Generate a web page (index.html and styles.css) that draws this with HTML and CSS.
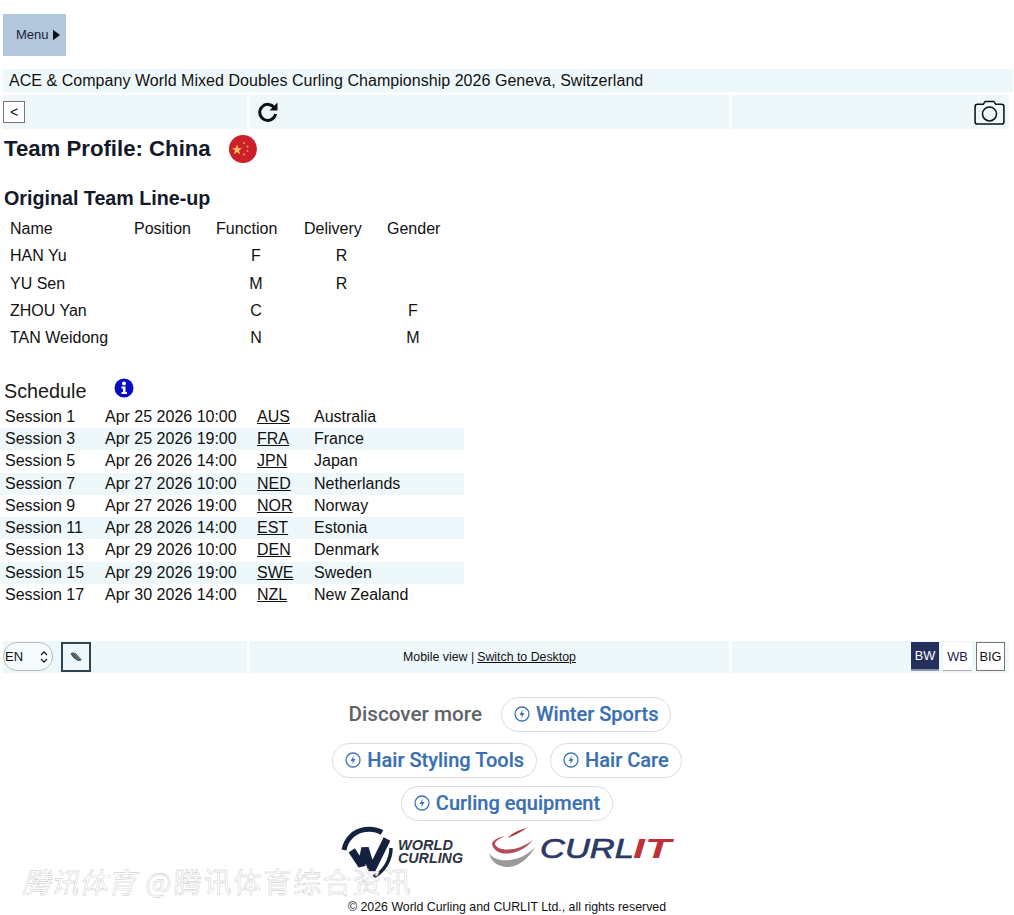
FILE: index.html
```html
<!DOCTYPE html>
<html lang="en">
<head>
<meta charset="utf-8">
<title>Team Profile: China</title>
<link rel="stylesheet" href="styles.css">
</head>
<body>
<div class="page">
  <button class="menu-btn">Menu <svg class="menu-arrow" viewBox="0 0 8 12" width="7" height="12"><path d="M0 0L8 6L0 12Z"/></svg></button>
  <div class="title-band">ACE &amp; Company World Mixed Doubles Curling Championship 2026 Geneva, Switzerland</div>
  <div class="tri-band tool-band">
    <div class="cell cell-a"><button class="back-btn">&lt;</button></div>
    <div class="cell cell-b">
      <svg class="refresh" viewBox="0 0 24 24" width="24" height="24"><path d="M18.600 8.200A8 8 0 1 0 19.600 14" fill="none" stroke="#111" stroke-width="3"/><path d="M21.500 2.500V10.500H13.500Z" fill="#111"/></svg>
    </div>
    <div class="cell cell-c">
      <svg class="camera" viewBox="0 0 32 26" width="31" height="25"><path d="M3.500 4.500H9.500L11.500 1.500H20.500L22.500 4.500H28.500Q31 4.500 31 7V22.500Q31 25 28.500 25H3.500Q1 25 1 22.500V7Q1 4.500 3.500 4.500Z" fill="none" stroke="#111" stroke-width="1.600"/><circle cx="16" cy="14.500" r="7.300" fill="none" stroke="#111" stroke-width="1.600"/></svg>
    </div>
  </div>

  <div class="profile-head">
    <h1 class="profile-title">Team Profile: China</h1>
    <svg class="flag" viewBox="0 0 28 28" width="28" height="28">
      <circle cx="14" cy="14" r="14" fill="#cb2029"/>
      <path d="M8 9.500L9.300 13.200H13L10 15.500L11.100 19.200L8 17L4.900 19.200L6 15.500L3 13.200H6.700Z" fill="#f7c35f"/>
      <circle cx="15" cy="8" r="1" fill="#f0a050"/><circle cx="18.500" cy="11.500" r="1" fill="#f0a050"/><circle cx="18.500" cy="16" r="1" fill="#f0a050"/><circle cx="15" cy="19.500" r="1" fill="#f0a050"/>
    </svg>
  </div>

  <h2 class="lineup-title">Original Team Line-up</h2>
  <table class="lineup">
    <tr><td class="l-name">Name</td><td class="l-pos">Position</td><td class="l-h">Function</td><td class="l-h l-h-wide">Delivery</td><td class="l-h">Gender</td></tr>
    <tr><td class="l-name">HAN Yu</td><td></td><td class="l-c">F</td><td class="l-c">R</td><td></td></tr>
    <tr><td class="l-name">YU Sen</td><td></td><td class="l-c">M</td><td class="l-c">R</td><td></td></tr>
    <tr><td class="l-name">ZHOU Yan</td><td></td><td class="l-c">C</td><td></td><td class="l-c">F</td></tr>
    <tr><td class="l-name">TAN Weidong</td><td></td><td class="l-c">N</td><td></td><td class="l-c">M</td></tr>
  </table>

  <div class="schedule-head">
    <span class="schedule-title">Schedule</span>
    <svg class="info" viewBox="0 0 20 20" width="20" height="20"><circle cx="10" cy="10" r="9.500" fill="#0b0bc4"/><circle cx="10" cy="5.500" r="2" fill="#fff"/><path d="M7.500 8.500H11.500V14H13V16H7.500V14H9V10.500H7.500Z" fill="#fff"/></svg>
  </div>
  <div class="schedule">
    <div class="s-row"><span class="s-a">Session 1</span><span class="s-b">Apr 25 2026 10:00</span><a class="s-c">AUS</a><span>Australia</span></div>
    <div class="s-row alt"><span class="s-a">Session 3</span><span class="s-b">Apr 25 2026 19:00</span><a class="s-c">FRA</a><span>France</span></div>
    <div class="s-row"><span class="s-a">Session 5</span><span class="s-b">Apr 26 2026 14:00</span><a class="s-c">JPN</a><span>Japan</span></div>
    <div class="s-row alt"><span class="s-a">Session 7</span><span class="s-b">Apr 27 2026 10:00</span><a class="s-c">NED</a><span>Netherlands</span></div>
    <div class="s-row"><span class="s-a">Session 9</span><span class="s-b">Apr 27 2026 19:00</span><a class="s-c">NOR</a><span>Norway</span></div>
    <div class="s-row alt"><span class="s-a">Session 11</span><span class="s-b">Apr 28 2026 14:00</span><a class="s-c">EST</a><span>Estonia</span></div>
    <div class="s-row"><span class="s-a">Session 13</span><span class="s-b">Apr 29 2026 10:00</span><a class="s-c">DEN</a><span>Denmark</span></div>
    <div class="s-row alt"><span class="s-a">Session 15</span><span class="s-b">Apr 29 2026 19:00</span><a class="s-c">SWE</a><span>Sweden</span></div>
    <div class="s-row"><span class="s-a">Session 17</span><span class="s-b">Apr 30 2026 14:00</span><a class="s-c">NZL</a><span>New Zealand</span></div>
  </div>

  <div class="tri-band foot-band">
    <div class="cell cell-a foot-left">
      <div class="lang">EN<svg viewBox="0 0 8 14" width="8" height="14"><path d="M1 5L4 2L7 5M1 9L4 12L7 9" fill="none" stroke="#222" stroke-width="1.300"/></svg></div>
      <div class="pencil"><svg viewBox="0 0 12 10" width="12" height="10"><path d="M0.500 1.500Q3 -0.500 6 1.500L11.500 7.500Q11 9.500 8 9Q3 6.500 0.500 1.500Z" fill="#3a4650"/><path d="M2 1.500L9 8.500M4 1L10.500 7.500" stroke="#cfd8dc" stroke-width="0.500"/></svg></div>
    </div>
    <div class="cell cell-b foot-mid">Mobile view | <a>Switch to Desktop</a></div>
    <div class="cell cell-c foot-right">
      <span class="mode mode-bw">BW</span><span class="mode mode-wb">WB</span><span class="mode mode-big">BIG</span>
    </div>
  </div>

  <div class="discover">
    <div class="d-row d-row-first"><span class="d-label">Discover more</span><span class="chip"><svg class="bolt" viewBox="0 0 16 16" width="16" height="16"><circle cx="8" cy="8" r="7" fill="none" stroke="#3f73b4" stroke-width="1.300"/><path d="M8.800 3.500L5.500 9H7.800L7.200 12.500L10.500 7H8.200Z" fill="#3f73b4"/></svg>Winter Sports</span></div>
    <div class="d-row"><span class="chip"><svg class="bolt" viewBox="0 0 16 16" width="16" height="16"><circle cx="8" cy="8" r="7" fill="none" stroke="#3f73b4" stroke-width="1.300"/><path d="M8.800 3.500L5.500 9H7.800L7.200 12.500L10.500 7H8.200Z" fill="#3f73b4"/></svg>Hair Styling Tools</span><span class="chip"><svg class="bolt" viewBox="0 0 16 16" width="16" height="16"><circle cx="8" cy="8" r="7" fill="none" stroke="#3f73b4" stroke-width="1.300"/><path d="M8.800 3.500L5.500 9H7.800L7.200 12.500L10.500 7H8.200Z" fill="#3f73b4"/></svg>Hair Care</span></div>
    <div class="d-row"><span class="chip"><svg class="bolt" viewBox="0 0 16 16" width="16" height="16"><circle cx="8" cy="8" r="7" fill="none" stroke="#3f73b4" stroke-width="1.300"/><path d="M8.800 3.500L5.500 9H7.800L7.200 12.500L10.500 7H8.200Z" fill="#3f73b4"/></svg>Curling equipment</span></div>
  </div>

  <div class="logos">
    <svg class="logo-wc" viewBox="0 0 125 52" width="125" height="52">
      <path d="M4 24C6 13 14 5 25 3.500C32 2.700 37 3.500 42 6.500" fill="none" stroke="#14213f" stroke-width="5"/>
      <path d="M11.700 24.300L21.700 39.300L25 22L31.700 44L47 13" fill="none" stroke="#14213f" stroke-width="7.500" stroke-linejoin="bevel"/>
      <path d="M51 22C51 34 44 46 33 51" fill="none" stroke="#14213f" stroke-width="3.500"/>
      <text class="wc-text" x="58" y="24" textLength="55" lengthAdjust="spacingAndGlyphs">WORLD</text>
      <text class="wc-text" x="58" y="37" textLength="65" lengthAdjust="spacingAndGlyphs">CURLING</text>
    </svg>
    <svg class="logo-curlit" viewBox="0 0 186 44" width="186" height="44">
      <path d="M39 2C30 4 24 7 20 12C27 9 33 6 39 2Z" fill="#a83a4a"/>
      <path d="M4 17C7 13 11 11 17 10C11 13 7 15 7 18C9 25 28 27 45 14C35 26 22 29 13 27C7 25 4 21 4 17Z" fill="#b54c5b"/>
      <path d="M1 27C5 34 17 36 27 33C35 31 41 27 47 21C42 31 31 41 20 41C9 41 2 34 1 27Z" fill="#9a9a9a"/>
      <text class="cu-text" x="52" y="32" textLength="94" lengthAdjust="spacingAndGlyphs">CURL</text>
      <text class="cu-text cu-red" x="145" y="32" textLength="38" lengthAdjust="spacingAndGlyphs">IT</text>
    </svg>
  </div>
  <div class="copyright">© 2026 World Curling and CURLIT Ltd., all rights reserved</div>
  <div class="watermark"><span class="wm-i">腾讯体育</span> <span class="wm-r">@腾讯体育综合资讯</span></div>
</div>
</body>
</html>
```
FILE: styles.css
```css
* { box-sizing: border-box; }
html, body { margin: 0; padding: 0; background: #fff; }
body { font-family: "Liberation Sans", Arial, sans-serif; color: #111; font-size: 16px; }
.page { position: relative; width: 1014px; height: 915px; overflow: hidden; padding-top: 14px; }
.menu-btn { display: flex; align-items: center; gap: 4px; width: 63px; height: 42px; margin: 0 0 0 3px; padding: 0 0 2px 13px; border: 0; background: #b3c7dc; color: #16233a; font: 13px "Liberation Sans", sans-serif; }
.menu-arrow { fill: #111; margin-top: 2px; }
.title-band { height: 23px; margin: 13px 1px 3px 3px; padding-left: 6px; background: #eef8fb; line-height: 23px; font-size: 16px; letter-spacing: 0.040px; white-space: nowrap; }
.tri-band { display: flex; gap: 3px; margin-left: 3px; background: #fff; }
.cell { background: #eef8fb; }
.cell-a { width: 244px; }
.cell-b { width: 479px; }
.cell-c { width: 277px; }
.tool-band { height: 34px; }
.tool-band .cell-a { display: flex; align-items: center; }
.back-btn { width: 22px; height: 22px; margin: 0; padding: 0; border: 1px solid #777; background: #fff; color: #111; font: 14px "Liberation Sans", sans-serif; }
.refresh { display: block; margin: 5px 0 0 6px; }
.tool-band .cell-c { display: flex; justify-content: flex-end; align-items: center; padding-right: 4px; }
.profile-head { display: flex; align-items: center; height: 38px; margin-top: 1px; padding-left: 4px; }
.profile-title { margin: 0; font-size: 22.200px; line-height: 38px; font-weight: 700; color: #14192a; }
.flag { margin-left: 18px; margin-top: -1px; }
.lineup-title { margin: 17px 0 0 4px; font-size: 19.700px; line-height: 26px; font-weight: 700; color: #14192a; }
.lineup { border-collapse: collapse; margin: 4.300px 0 0 0; table-layout: fixed; width: 442px; font-size: 16px; }
.lineup td { height: 27.300px; padding: 0; }
.lineup td:nth-child(1) { width: 127px; padding-left: 10px; }
.lineup td:nth-child(2) { width: 86px; padding-left: 7px; }
.lineup td:nth-child(3) { width: 86px; }
.lineup td:nth-child(4) { width: 85px; }
.lineup td:nth-child(5) { width: 58px; }
.lineup td.l-c { text-align: center; padding-left: 0; }
.lineup td.l-h { text-align: left; padding-left: 3px; }
.lineup td.l-h-wide { padding-left: 5px; }
.schedule-head { position: relative; display: flex; align-items: flex-end; height: 26px; margin-top: 26.700px; padding-left: 4px; }
.schedule-title { font-size: 19.800px; line-height: 26px; color: #1a1a1a; }
.info { margin-left: 27px; margin-bottom: 6px; }
.schedule { width: 464px; margin-top: 1.300px; font-size: 16px; }
.s-row { display: flex; align-items: center; height: 22.250px; padding-left: 5px; white-space: nowrap; }
.s-row.alt { background: #eef8fb; }
.s-a { width: 100px; }
.s-b { width: 152px; }
.s-c { width: 57px; text-decoration: underline; }
.foot-band { height: 32px; margin-top: 34.700px; }
.foot-left { display: flex; align-items: center; }
.lang { display: flex; align-items: center; justify-content: space-between; width: 50px; height: 29px; margin-left: 0; padding: 0 4px 0 1px; border: 1px solid #bbb; border-radius: 14px; font-size: 13px; background: #f4fafd; }
.pencil { display: flex; align-items: center; justify-content: center; width: 30px; height: 30px; margin-left: 8px; border: 2px solid #2d4450; }
.foot-mid { display: flex; align-items: center; justify-content: center; font-size: 12.350px; }
.foot-mid a { margin-left: 3px; text-decoration: underline; }
.foot-right { display: flex; align-items: center; justify-content: flex-end; padding-right: 4px; gap: 2px; }
.mode { display: flex; align-items: center; justify-content: center; width: 28px; height: 29px; font-size: 12.800px; }
.mode-bw { background: #24305c; color: #fff; border-bottom: 2px solid #8b95a8; }
.mode-wb { border-bottom: 1px solid #aaa; color: #14204a; background: #fff; margin-left: 2px; width: 29px; }
.mode-big { border: 1px solid #777; background: #fff; width: 29px; margin-left: 2px; }
.discover { display: flex; flex-direction: column; align-items: center; gap: 8px; margin-top: 24px; }
.d-row { display: flex; align-items: center; gap: 13px; height: 35px; }
.d-row-first { gap: 19px; margin-bottom: 3px; }
.d-label { font: 500 20.700px Roboto, sans-serif; color: #5f6368; margin-left: 6px; }
.chip { display: flex; align-items: center; gap: 6px; height: 35px; padding: 0 12px; border: 1px solid #dadce0; border-radius: 18px; font: 500 20px Roboto, sans-serif; color: #3a70b2; background: #fff; -webkit-text-stroke: 0.200px #3a70b2; }
.logos { display: flex; justify-content: center; gap: 23px; align-items: flex-start; margin-top: 5px; }
.wc-text { font: italic 700 14px "Liberation Sans", sans-serif; fill: #2e3440; }
.cu-text { font: italic 400 28px "Liberation Sans", sans-serif; fill: #2d3a66; stroke: #2d3a66; stroke-width: 0.700px; }
.cu-red { font-weight: 700; fill: #c03036; stroke: none; }
.copyright { margin-top: 22px; text-align: center; font-size: 12.350px; }
.watermark { position: absolute; left: 22px; top: 867px; font: 400 28px/28px "Noto Sans CJK SC", sans-serif; color: #fff; -webkit-text-stroke: 0.400px #c4c4c4; white-space: nowrap; }
.wm-i { font-style: italic; letter-spacing: 0.500px; }
.wm-r { margin-left: 3px; letter-spacing: 1.900px; }
```
